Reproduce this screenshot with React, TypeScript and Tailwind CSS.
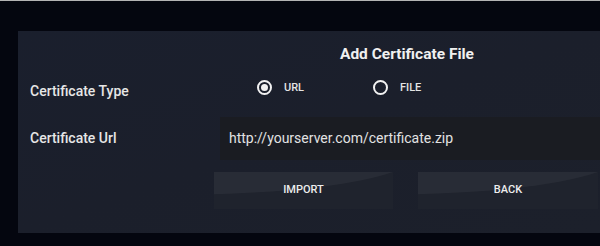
import React from "react";

function Radio({ checked, label, width }: { checked: boolean; label: string; width?: string }) {
  return (
    <div className={`flex items-center gap-[12px] ${width ?? ""}`}>
      <span className="flex h-[15px] w-[15px] items-center justify-center rounded-full border-2 border-[#f2f2f2]">
        {checked && <span className="h-[7px] w-[7px] rounded-full bg-[#f2f2f2]" />}
      </span>
      <span className="text-[11px] font-medium leading-none text-[#e4e4e4]">{label}</span>
    </div>
  );
}

function TvButton({ label, width }: { label: string; width: string }) {
  return (
    <button
      type="button"
      className={`relative flex h-[37px] ${width} items-center justify-center overflow-hidden bg-[#1f232d] text-[11px] font-medium text-[#ededed]`}
    >
      {/* glossy sheen on top of the button */}
      <svg className="absolute inset-0 h-full w-full" viewBox="0 0 100 100" preserveAspectRatio="none">
        <path d="M0 0 H100 Q70 50 0 60 Z" fill="#ffffff" fillOpacity="0.045" />
      </svg>
      <span className="relative">{label}</span>
    </button>
  );
}

export default function App() {
  return (
    <div
      className="h-[246px] w-[600px] overflow-hidden border-t border-[#b4b4b4] bg-[#04060f]"
      style={{ fontFamily: "Roboto, 'Noto Sans', sans-serif" }}
    >
      <div className="ml-[18px] mt-[30px] flex h-[202px] flex-col bg-gradient-to-br from-[#1a1f2d] via-[#1b1f2b] to-[#1c202b] pl-[12px] pt-[14px]">
        <div className="flex">
          <div className="w-[184px]" />
          <div className="flex-1 text-center text-[15.5px] font-bold leading-[18px] text-[#f0f0f0]">
            Add Certificate File
          </div>
        </div>

        <div className="mt-[9px] flex h-[30px] items-center">
          <div className="mt-[8px] w-[184px] text-[14px] font-medium text-[#e6e6e6]">Certificate Type</div>
          <div className="ml-[43px] flex items-center">
            <Radio checked label="URL" width="w-[116px]" />
            <Radio checked={false} label="FILE" />
          </div>
        </div>

        <div className="mt-[15px] flex items-center">
          <div className="w-[184px] text-[14px] font-medium text-[#e6e6e6]">Certificate Url</div>
          <div className="ml-[6px] flex h-[43px] flex-1 items-center bg-[#1a1c22] pl-[9px] text-[14px] text-[#e2e2e2]">
            http://yourserver.com/certificate.zip
          </div>
        </div>

        <div className="mt-[12px] flex">
          <div className="w-[184px]" />
          <div className="flex gap-[25px]">
            <TvButton label="IMPORT" width="w-[179px]" />
            <TvButton label="BACK" width="w-[180px]" />
          </div>
        </div>
      </div>
    </div>
  );
}
